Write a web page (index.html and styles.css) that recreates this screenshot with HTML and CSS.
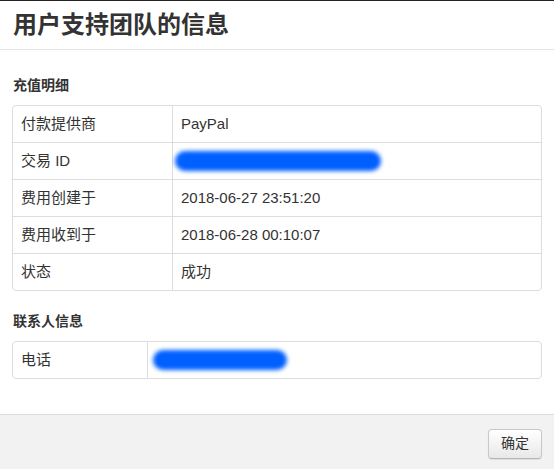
FILE: index.html
```html
<!DOCTYPE html>
<html lang="zh-CN">
<head>
<meta charset="utf-8">
<title>用户支持团队的信息</title>
<link rel="stylesheet" href="styles.css">
</head>
<body>
<div class="modal">
  <header class="modal-header">
    <h1 class="modal-title">用户支持团队的信息</h1>
  </header>
  <main class="modal-body">
    <h2 class="section-title">充值明细</h2>
    <div class="info-table info-table--wide">
      <div class="row">
        <div class="cell label">付款提供商</div>
        <div class="cell value">PayPal</div>
      </div>
      <div class="row">
        <div class="cell label">交易 ID</div>
        <div class="cell value"><span class="redact redact--long"></span></div>
      </div>
      <div class="row">
        <div class="cell label">费用创建于</div>
        <div class="cell value">2018-06-27 23:51:20</div>
      </div>
      <div class="row">
        <div class="cell label">费用收到于</div>
        <div class="cell value">2018-06-28 00:10:07</div>
      </div>
      <div class="row">
        <div class="cell label">状态</div>
        <div class="cell value">成功</div>
      </div>
    </div>
    <h2 class="section-title section-title--second">联系人信息</h2>
    <div class="info-table info-table--narrow">
      <div class="row">
        <div class="cell label">电话</div>
        <div class="cell value"><span class="redact redact--short"></span></div>
      </div>
    </div>
  </main>
  <footer class="modal-footer">
    <button class="btn" type="button">确定</button>
  </footer>
</div>
</body>
</html>
```

FILE: styles.css
```css
* { box-sizing: border-box; }

html, body {
  margin: 0;
  padding: 0;
  background: #ffffff;
}

body {
  font-family: "Liberation Sans", "Noto Sans CJK SC", sans-serif;
  color: #333333;
}

.modal {
  display: flex;
  flex-direction: column;
  height: 100vh;
  border-top: 1px solid #222222;
}

.modal-header {
  height: 49px;
  border-bottom: 1px solid #e5e5e5;
  padding: 0 13px;
  display: flex;
  align-items: center;
}

.modal-title {
  margin: 0;
  font-size: 24px;
  line-height: 28px;
  font-weight: bold;
  color: #333333;
}

.modal-body {
  flex: 1;
  padding: 0 12px;
}

.section-title {
  margin: 25px 0 10px 1px;
  font-size: 14px;
  line-height: 20px;
  font-weight: bold;
  color: #333333;
}

.section-title--second {
  margin-top: 20px;
}

.info-table {
  border: 1px solid #dddddd;
  border-radius: 4px;
  font-size: 15px;
}

.row {
  display: flex;
  height: 37px;
  border-top: 1px solid #dddddd;
}

.row:first-child {
  height: 36px;
  border-top: none;
}

.cell {
  display: flex;
  align-items: center;
  padding-left: 8px;
  line-height: 18px;
}

.label {
  border-right: 1px solid #dddddd;
}

.info-table--wide .label { width: 160px; }
.info-table--narrow .label { width: 135px; }

.value {
  flex: 1;
}

.redact {
  display: inline-block;
  height: 20px;
  border-radius: 10px;
  background: #0060ff;
  filter: blur(2px);
}

.redact--long {
  width: 206px;
  margin-left: -6px;
}

.redact--short {
  width: 134px;
  margin-left: -3px;
}

.modal-footer {
  height: 55px;
  background: #f2f2f2;
  border-top: 1px solid #dddddd;
  display: flex;
  justify-content: flex-end;
  align-items: flex-start;
  padding: 14px 12px 0 0;
}

.btn {
  width: 54px;
  height: 30px;
  border: 1px solid #c8c8c8;
  border-bottom-color: #b5b5b5;
  border-radius: 4px;
  background: linear-gradient(#ffffff, #e8e8e8);
  box-shadow: 0 1px 1px rgba(0, 0, 0, 0.08);
  font-family: "Liberation Sans", "Noto Sans CJK SC", sans-serif;
  font-size: 14px;
  line-height: 16px;
  color: #333333;
  padding: 0 0 2px;
}
```
